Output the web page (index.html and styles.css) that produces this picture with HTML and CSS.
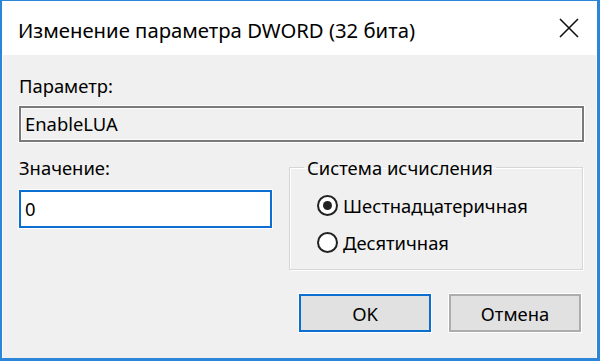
FILE: index.html
```html
<!DOCTYPE html>
<html lang="ru">
<head>
<meta charset="utf-8">
<title>Изменение параметра DWORD</title>
<link rel="stylesheet" href="styles.css">
</head>
<body>
<div class="window">
  <div class="titlebar">
    <span class="title">Изменение параметра DWORD (32 бита)</span>
    <svg class="close" width="20" height="20" viewBox="0 0 20 20"><path d="M1 1 L19 19 M19 1 L1 19" stroke="#111" stroke-width="1.6" fill="none"/></svg>
  </div>
  <div class="content">
    <div class="label">Параметр:</div>
    <div class="field readonly">EnableLUA</div>
    <div class="row">
      <div class="col-left">
        <div class="label">Значение:</div>
        <div class="field value">0</div>
      </div>
      <fieldset class="group">
        <legend>Система исчисления</legend>
        <div class="radio-row"><span class="radio checked"></span><span>Шестнадцатеричная</span></div>
        <div class="radio-row"><span class="radio"></span><span>Десятичная</span></div>
      </fieldset>
    </div>
    <div class="buttons">
      <div class="btn default">OK</div>
      <div class="btn">Отмена</div>
    </div>
  </div>
</div>
</body>
</html>
```
FILE: styles.css
```css
html, body {
  margin: 0;
  padding: 0;
  background: #ffffff;
}
body {
  font-family: "Noto Sans", "Open Sans", sans-serif;
  color: #000;
}
.window {
  width: 600px;
  height: 361px;
  box-sizing: border-box;
  border-style: solid;
  border-color: #2b86d9;
  border-width: 1px 3px 3px 2px;
  display: flex;
  flex-direction: column;
  background: #f0f0f0;
}
.titlebar {
  height: 54px;
  flex: none;
  background: #fff;
  display: flex;
  align-items: center;
  justify-content: space-between;
  padding: 0 16px 0 16px;
  border-right: 2px solid #fff;
}
.title {
  font-size: 20.3px;
  position: relative;
  top: 2px;
}
.content {
  flex: 1;
  padding: 18px 12px 0 16px;
  display: flex;
  flex-direction: column;
  border-left: 1px solid #fff;
  border-right: 1px solid #fff;
}
.label {
  font-size: 18.4px;
  line-height: 25px;
  height: 25px;
}
.field {
  box-sizing: border-box;
  font-size: 18.4px;
  line-height: 24px;
  padding-left: 4px;
  display: flex;
  align-items: center;
}
.readonly {
  margin-top: 8px;
  height: 36px;
  border: 2px solid #7a7a7a;
  background: #f0f0f0;
  box-shadow: inset 0 0 0 1px #fbfbfb, 0 0 0 1px #fff;
}
.row {
  margin-top: 13px;
  display: flex;
  gap: 17px;
}
.col-left {
  width: 253px;
  flex: none;
}
.value {
  margin-top: 10px;
  height: 38px;
  border: 2px solid #0a6fd0;
  background: #fff;
  box-shadow: 0 0 0 1px #fff;
}
.group {
  flex: 1;
  margin: 0;
  padding: 7px 14px 0 27px;
  border: 1px solid #d6d6d6;
  box-shadow: inset 1px 1px 0 #fff, 1px 1px 0 #fff;
  height: 115px;
  box-sizing: border-box;
  margin-right: 1px;
}
.group legend {
  font-size: 18.4px;
  line-height: 25px;
  padding: 0 3px;
  margin-left: -13px;
}
.radio-row {
  display: flex;
  align-items: center;
  gap: 5px;
  font-size: 18.4px;
  height: 37px;
}
.radio {
  width: 17px;
  height: 17px;
  border: 2px solid #222;
  border-radius: 50%;
  background: #fff;
  flex: none;
  display: flex;
  align-items: center;
  justify-content: center;
}
.radio.checked::after {
  content: "";
  width: 9px;
  height: 9px;
  border-radius: 50%;
  background: #222;
}
.buttons {
  margin-top: 24px;
  display: flex;
  justify-content: flex-end;
  gap: 18px;
  padding-right: 3px;
}
.btn {
  width: 132px;
  height: 38px;
  box-sizing: border-box;
  background: #e1e1e1;
  border: 2px solid #adadad;
  font-size: 18.4px;
  display: flex;
  align-items: center;
  justify-content: center;
  box-shadow: 0 0 0 1px #fff;
}
.btn.default {
  border-color: #0a6fd0;
}
```
